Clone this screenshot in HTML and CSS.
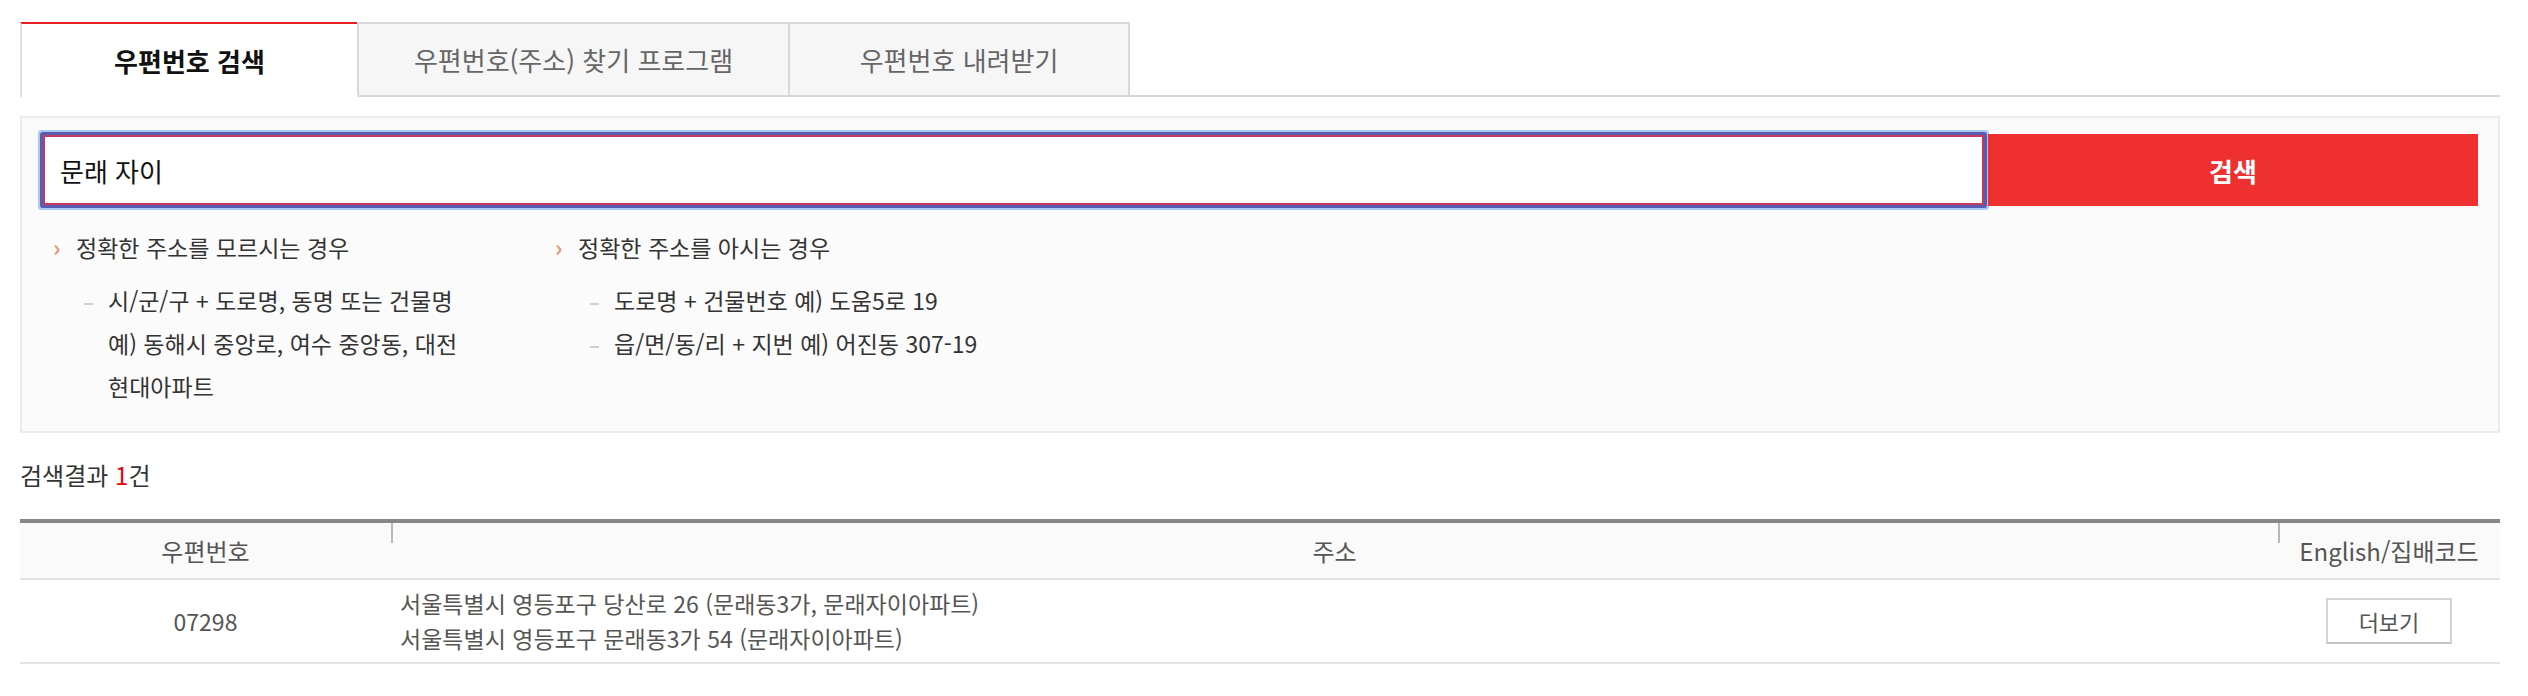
FILE: index.html
```html
<!DOCTYPE html>
<html lang="ko">
<head>
    <meta charset="UTF-8">
    <meta name="viewport" content="width=device-width, initial-scale=1.0">
    <title>우편번호 검색</title>
    <link rel="stylesheet" href="styles.css">
</head>
<body>
<div class="wrap">
    <!-- 탭 -->
    <ul class="tabs">
        <li class="tab tab-search on">우편번호 검색</li>
        <li class="tab tab-program">우편번호(주소) 찾기 프로그램</li>
        <li class="tab tab-down">우편번호 내려받기</li>
    </ul>

    <!-- 검색 영역 -->
    <div class="search-box">
        <form class="search-row">
            <input class="search-input" type="text" value="문래 자이">
            <button class="search-btn" type="button">검색</button>
        </form>
        <div class="guide">
            <div class="guide-col guide-left">
                <p class="guide-title">정확한 주소를 모르시는 경우</p>
                <ul class="guide-list">
                    <li>시/군/구 + 도로명, 동명 또는 건물명<br>예) 동해시 중앙로, 여수 중앙동, 대전<br>현대아파트</li>
                </ul>
            </div>
            <div class="guide-col guide-right">
                <p class="guide-title">정확한 주소를 아시는 경우</p>
                <ul class="guide-list">
                    <li>도로명 + 건물번호 예) 도움5로 19</li>
                    <li>읍/면/동/리 + 지번 예) 어진동 307-19</li>
                </ul>
            </div>
        </div>
    </div>

    <!-- 검색 결과 -->
    <h3 class="result-title">검색결과 <em>1</em>건</h3>
    <table class="result-table">
        <colgroup>
            <col class="col-zip">
            <col>
            <col class="col-eng">
        </colgroup>
        <thead>
            <tr>
                <th>우편번호</th>
                <th class="sep">주소</th>
                <th class="sep">English/집배코드</th>
            </tr>
        </thead>
        <tbody>
            <tr>
                <td class="zip">07298</td>
                <td class="addr">서울특별시 영등포구 당산로 26 (문래동3가, 문래자이아파트)<br>서울특별시 영등포구 문래동3가 54 (문래자이아파트)</td>
                <td class="more"><button class="more-btn" type="button">더보기</button></td>
            </tr>
        </tbody>
    </table>
</div>
</body>
</html>
```

FILE: styles.css
```css
*{
    box-sizing: border-box;
    margin: 0;
    padding: 0;
    list-style-type: none;
}
body{
    font-family: "Noto Sans CJK KR", "Noto Sans", sans-serif;
    color: #333;
    background: #fff;
}
.wrap{
    padding: 22px 28px 0 20px;
}

/* 탭 */
.tabs{
    display: flex;
    border-bottom: 2px solid #d6d6d6;
}
.tab{
    height: 73px;
    display: flex;
    align-items: center;
    justify-content: center;
    font-size: 26px;
    color: #666;
    background: #f6f6f6;
    border: 2px solid #d9d9d9;
    border-bottom: 0;
    margin-left: -2px;
}
.tab.on{
    margin-left: 0;
    height: 75px;
    margin-bottom: -2px;
    background: #fff;
    color: #111;
    font-weight: bold;
    font-size: 26px;
    border-color: #e0e0e0;
    border-top-color: #e31e24;
}
.tab-search{ width: 339px; }
.tab-program{ width: 433px; }
.tab-down{ width: 342px; }

/* 검색 영역 */
.search-box{
    margin-top: 19px;
    border: 2px solid #ececec;
    background: #fbfbfb;
    padding: 16px 20px 23px 20px;
}
.search-row{
    display: flex;
    height: 72px;
}
.search-input{
    flex: 1;
    margin: 1px 4px 1px 1px;
    border: 2px solid #c33a5e;
    border-radius: 1px;
    box-shadow: 0 0 0 3px #5c5cae, 0 0 0 5px #a8c8f6;
    background: #fff;
    padding: 0 15px;
    font-family: inherit;
    font-size: 26px;
    color: #111;
    outline: none;
}
.search-btn{
    width: 490px;
    border: 0;
    background: #ee3130;
    color: #fff;
    font-family: inherit;
    font-size: 26px;
    font-weight: bold;
}

.guide{
    display: flex;
    padding: 20px 0 0 11px;
}
.guide-left{
    width: 502px;
}
.guide-title{
    font-size: 23px;
    line-height: 43px;
    padding-left: 23px;
}
.guide-title::before{
    content: "›";
    display: inline-block;
    width: 23px;
    margin-left: -23px;
    color: #e39a6a;
    font-weight: bold;
}
.guide-list{
    margin-top: 10px;
}
.guide-list li{
    font-size: 23px;
    line-height: 43px;
    padding-left: 55px;
}
.guide-list li::before{
    content: "";
    display: inline-block;
    vertical-align: middle;
    width: 9px;
    height: 2px;
    margin: 0 15px 0 -24px;
    background: #cfcfcf;
}
.guide-right .guide-list li{
    padding-left: 59px;
}

/* 검색 결과 */
.result-title{
    margin-top: 27px;
    font-size: 24px;
    line-height: 30px;
    font-weight: normal;
    color: #333;
}
.result-title em{
    font-style: normal;
    color: #e60012;
}
.result-table{
    margin-top: 29px;
    width: 100%;
    border-collapse: collapse;
    border-top: 4px solid #888;
}
.col-zip{ width: 371px; }
.col-eng{ width: 222px; }
.result-table th{
    height: 58px;
    background: #fafafa;
    border-bottom: 2px solid #e2e2e2;
    font-size: 24px;
    font-weight: normal;
    color: #555;
}
.result-table th.sep{
    background: linear-gradient(#b8b8b8, #b8b8b8) left top / 2px 20px no-repeat, #fafafa;
}
.result-table td{
    height: 84px;
    border-bottom: 2px solid #e2e2e2;
    font-size: 23px;
    color: #555;
}
.zip{
    text-align: center;
    font-size: 24px;
}
.addr{
    padding-left: 9px;
    line-height: 35px;
}
.more{
    text-align: center;
}
.more-btn{
    width: 126px;
    height: 46px;
    border: 2px solid #d4d4d4;
    border-bottom-color: #c4c4c4;
    background: #fff;
    font-family: inherit;
    font-size: 22px;
    color: #555;
}
```
